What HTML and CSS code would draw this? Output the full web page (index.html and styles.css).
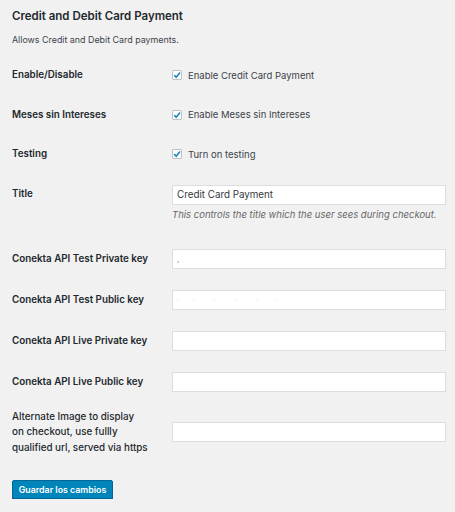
FILE: index.html
```html
<!DOCTYPE html>
<html lang="es">
<head>
<meta charset="utf-8">
<title>Credit and Debit Card Payment</title>
<link rel="stylesheet" href="styles.css">
</head>
<body>
<div class="wrap">
  <h2 class="title">Credit and Debit Card Payment</h2>
  <p class="intro">Allows Credit and Debit Card payments.</p>

  <div class="row row-check">
    <div class="label">Enable/Disable</div>
    <label class="check"><span class="box"><svg viewBox="0 0 10 10" width="10" height="10"><path d="M2.2 5.2 L4.2 7.3 L8 2.4" fill="none" stroke="#1e8cbe" stroke-width="1.7"/></svg></span>Enable Credit Card Payment</label>
  </div>
  <div class="row row-check row-check2">
    <div class="label">Meses sin Intereses</div>
    <label class="check"><span class="box"><svg viewBox="0 0 10 10" width="10" height="10"><path d="M2.2 5.2 L4.2 7.3 L8 2.4" fill="none" stroke="#1e8cbe" stroke-width="1.7"/></svg></span>Enable Meses sin Intereses</label>
  </div>
  <div class="row row-check">
    <div class="label">Testing</div>
    <label class="check"><span class="box"><svg viewBox="0 0 10 10" width="10" height="10"><path d="M2.2 5.2 L4.2 7.3 L8 2.4" fill="none" stroke="#1e8cbe" stroke-width="1.7"/></svg></span>Turn on testing</label>
  </div>

  <div class="row row-title">
    <div class="label label-top">Title</div>
    <div class="field">
      <div class="input">Credit Card Payment</div>
      <p class="desc">This controls the title which the user sees during checkout.</p>
    </div>
  </div>

  <div class="row row-input">
    <div class="label">Conekta API Test Private key</div>
    <div class="input"><span class="mark">,</span></div>
  </div>
  <div class="row row-input">
    <div class="label">Conekta API Test Public key</div>
    <div class="input"><span class="faint">·&nbsp;&nbsp;&nbsp;&nbsp;&nbsp;·&nbsp;&nbsp;&nbsp;&nbsp;&nbsp;&nbsp;&nbsp;·&nbsp;&nbsp;&nbsp;&nbsp;&nbsp;&nbsp;&nbsp;&nbsp;·&nbsp;&nbsp;&nbsp;&nbsp;&nbsp;&nbsp;&nbsp;·&nbsp;&nbsp;&nbsp;&nbsp;&nbsp;&nbsp;·</span></div>
  </div>
  <div class="row row-input">
    <div class="label">Conekta API Live Private key</div>
    <div class="input"></div>
  </div>
  <div class="row row-input">
    <div class="label">Conekta API Live Public key</div>
    <div class="input"></div>
  </div>
  <div class="row row-alt">
    <div class="label label-multi">Alternate Image to display<br>on checkout, use fullly<br>qualified url, served via https</div>
    <div class="input"></div>
  </div>

  <button class="button" type="button">Guardar los cambios</button>
</div>
</body>
</html>
```
FILE: styles.css
```css
html, body {
  margin: 0;
  padding: 0;
  background: #f1f1f1;
}
body {
  font-family: "Inter", "Liberation Sans", sans-serif;
  color: #23282d;
}
.wrap {
  padding: 6px 0 0 12px;
  width: 434px;
}
.title {
  margin: 0;
  font-size: 11.5px;
  line-height: 20px;
  font-weight: 600;
  color: #23282d;
}
.intro {
  margin: 8px 0 9px;
  font-size: 8.9px;
  line-height: 12px;
  color: #3c434a;
}
.row {
  display: grid;
  grid-template-columns: 160px 274px;
  align-items: center;
}
.row-check { height: 40px; }
.row-check2 { height: 39px; }
.row-title { height: 64px; align-items: start; padding-top: 11px; box-sizing: border-box; }
.row-input { height: 41px; }
.row-alt { height: 60px; }
.label {
  font-size: 9.8px;
  font-weight: 600;
  line-height: 14px;
  color: #23282d;
}
.label-top { margin-top: 2px; }
.label-multi {
  font-weight: 500;
  line-height: 15.5px;
}
.check {
  display: flex;
  align-items: center;
  font-size: 9.5px;
  color: #3c434a;
}
.box {
  width: 10px;
  height: 10px;
  box-sizing: border-box;
  border: 1px solid #bfc3c7;
  background: #fff;
  border-radius: 1px;
  margin-right: 6px;
  display: flex;
  align-items: center;
  justify-content: center;
  overflow: hidden;
}
.box svg { display: block; flex: none; }
.input {
  box-sizing: border-box;
  height: 20px;
  background: #fff;
  border: 1px solid #dddddd;
  padding: 0 4px;
  font-size: 9.8px;
  line-height: 18px;
  color: #32373c;
  overflow: hidden;
  white-space: nowrap;
}
.mark { color: #888; font-size: 8px; }
.faint { color: #e4e4e4; font-size: 9px; }
.desc {
  margin: 3px 0 0;
  font-size: 9.5px;
  line-height: 14px;
  font-style: italic;
  color: #666;
}
.button {
  margin-top: 18px;
  height: 19px;
  width: 101px;
  padding: 0;
  background: #0085ba;
  border: 1px solid #006799;
  border-radius: 2px;
  box-shadow: 0 1px 0 #006799;
  color: #fff;
  font-family: "Inter", "Liberation Sans", sans-serif;
  font-size: 8.8px;
  font-weight: 600;
  line-height: 17px;
  white-space: nowrap;
}
```
